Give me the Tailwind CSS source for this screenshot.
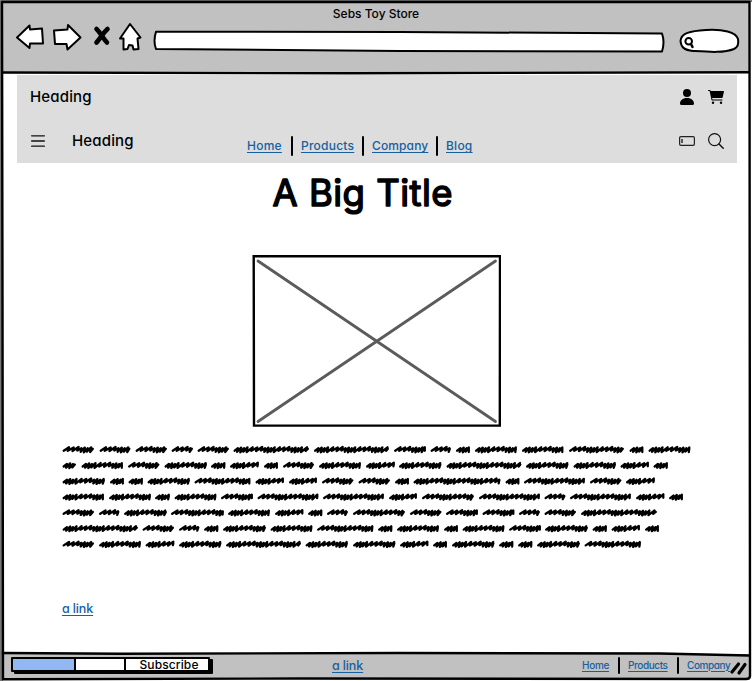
<!DOCTYPE html>
<html lang="en">
<head>
<meta charset="utf-8">
<title>Sebs Toy Store</title>
<script src="https://cdn.jsdelivr.net/npm/@tailwindcss/browser@4"></script>
</head>
<body class="bg-white">
<div class="relative flex h-[681px] w-[752px] flex-col overflow-hidden bg-white px-[3px] pt-[2px] font-[Inter,sans-serif] text-black [font-feature-settings:'cv11']">
  <!-- browser bar -->
  <header class="flex h-[71px] flex-col bg-[#c1c1c1]">
    <h1 class="flex h-[24px] items-center justify-center text-[12px] leading-none font-medium">Sebs Toy Store</h1>
    <svg class="h-[40px] w-[746px] shrink-0" viewBox="3 26 746 40" fill="white" stroke="black" stroke-width="2" stroke-linejoin="round" stroke-linecap="round" overflow="visible">
      <path d="M17 37.500L29.500 25.500L30 29.500L42 28.500L43 43.500L30 43.500L29.500 48Z"/>
      <path d="M54 30.500L67.500 29.500L68 25L80.500 37.500L67.500 49.500L66.500 44L55 44Z"/>
      <path d="M96.500 29C101 33 103 39 107 42.500M107.500 29C102 34 100 39 96.500 42.500" fill="none" stroke-width="4.600"/>
      <path d="M130 24L140.500 37.500L137.500 38.500L138.500 49L133.500 49.500L132.500 45.500L129 45L127.500 49L123.500 49.500L123.500 38.500L120 38.500Z"/>
      <path d="M156 31.700L400 32L662 33.500Q665 42 662 51.500L400 51L156 49Q153 41 156 31.700Z"/>
      <path d="M680.500 41C681 33 690 31 706 30C723 29 736 32 738 39C739 44 738 47 734 49C724 53 710 52 693 51C684 50 681 47 680.500 41Z"/>
      <circle cx="688.700" cy="41.200" r="3.300" fill="none"/>
      <path d="M691 44L692.500 47" stroke-width="2.500"/>
    </svg>
  </header>

  <!-- page area -->
  <main class="flex h-[581px] flex-col pt-[2px] pr-[12px] pl-[14px]">
    <div class="flex h-[88px] flex-col bg-[#dddddd]">
      <div class="flex h-[44px] items-center justify-between pr-[13px] pl-[13px]">
        <span class="-mt-[2px] text-[15px] leading-none font-medium tracking-[0.01em]">Heading</span>
        <div class="flex items-center gap-[13px]">
          <svg class="h-4 w-4" viewBox="0 0 16 16"><path d="M8 8a4 4 0 1 0 0-8 4 4 0 0 0 0 8m-7 6.500c0-3 2.500-5.500 7-5.500s7 2.500 7 5.500q0 1.500-1.500 1.500h-11Q1 16 1 14.500"/></svg>
          <svg class="h-4 w-4" viewBox="0 0 16 16"><path d="M0 1.500A.5.5 0 0 1 .5 1H2a.5.5 0 0 1 .485.379L2.750 2H15.500a.5.5 0 0 1 .49.600L14.600 8.600a.5.5 0 0 1-.49.400H4.200l.2 1.500H14a.5.5 0 0 1 0 1H4a.5.5 0 0 1-.49-.400L1.610 2H.5a.5.5 0 0 1-.5-.5z"/><circle cx="5" cy="13.800" r="1.200"/><circle cx="13" cy="13.800" r="1.200"/></svg>
        </div>
      </div>
      <div class="flex h-[44px] items-center pr-[13px] pl-[14px]">
        <svg class="h-3 w-[14px]" viewBox="0 0 14 12" fill="none" stroke="#111" stroke-width="1.300" stroke-linecap="round"><path d="M.6 .8H13.400M.6 6H13.400M.6 11.200H13.400"/></svg>
        <span class="-mt-[2px] ml-[27px] w-[62px] text-[15px] leading-none font-medium tracking-[0.01em]">Heading</span>
        <nav class="mt-[10px] ml-[113px] flex items-center text-[12px] leading-[15px] font-medium text-[#1660a0] [&>a]:-mt-[1px] [&>a]:underline [&>a]:decoration-1 [&>a]:underline-offset-[2px]">
          <a class="w-[36px] tracking-[0.02em]">Home</a><i class="mx-[8px] h-[20px] w-[2px] rounded bg-black"></i>
          <a class="w-[53px] tracking-[0.02em]">Products</a><i class="mx-[8px] h-[20px] w-[2px] rounded bg-black"></i>
          <a class="w-[56px] tracking-[0.01em]">Company</a><i class="mx-[8px] h-[20px] w-[2px] rounded bg-black"></i>
          <a class="w-[27px] tracking-[0.02em]">Blog</a>
        </nav>
        <div class="ml-auto flex items-center gap-[13px]">
          <svg class="h-4 w-4" viewBox="0 0 16 16" fill="none" stroke="#222"><rect x=".6" y="3.600" width="14.800" height="8.800" rx="1.300" stroke-width="1.200"/><path d="M3 6v4" stroke="#555" stroke-width="2"/></svg>
          <svg class="h-4 w-4" viewBox="0 0 16 16" fill="none" stroke="#111" stroke-width="1.200" stroke-linecap="round"><circle cx="6.600" cy="6.600" r="6"/><path d="M11 11L15.200 15.200" stroke-width="1.500"/></svg>
        </div>
      </div>
    </div>

    <svg class="h-[60px] w-[720px]" viewBox="17 163 720 60"><text x="272.500" y="205.500" textLength="180" lengthAdjust="spacing" class="text-[36.500px] font-normal [stroke-linejoin:round]" stroke="black" stroke-width="1.500">A Big Title</text></svg>

    <!-- image placeholder -->
    <svg class="mt-[32px] ml-[235px] h-[172px] w-[249px]" viewBox="252 255 249 172" fill="none" stroke-linecap="round">
      <path d="M258 261L495.500 421.500M495.500 261L258 421.500" stroke="#5b5b5b" stroke-width="2.800"/>
      <path d="M253.700 256.300L500 256.100L499.800 425.600L254 425.600Z" stroke="black" stroke-width="2.400"/>
    </svg>

    <!-- scribbled paragraph -->
    <svg id="scribble" class="mt-[13px] ml-[43px] h-[116px] w-[640px]" viewBox="60 440 640 116" fill="none" stroke="black" stroke-width="2.300" stroke-linecap="round" stroke-linejoin="round"></svg>

    <a class="mt-[45px] ml-[45px] w-[31px] text-[12.500px] leading-[15px] font-medium tracking-[-0.01em] whitespace-nowrap text-[#1660a0] underline decoration-1 underline-offset-[2px]">a link</a>
  </main>

  <!-- status bar -->
  <footer class="flex h-[24px] items-center bg-[#c1c1c1] pl-[8px]">
    <div class="-mt-[4px] flex h-[15px] w-[199px] rounded-[1px] border-2 border-black bg-white text-[12px] shadow-[3px_2px_0_#000]">
      <div class="w-[61px] bg-[#91b8f3]"></div>
      <div class="w-[52px] border-x-2 border-black"></div>
      <div class="flex flex-1 items-center justify-center pt-[2px] pl-[4px] leading-none font-medium tracking-[0.01em]">Subscribe</div>
    </div>
    <a class="-mt-[2px] ml-[122px] w-[31px] text-[12.500px] leading-[15px] font-medium tracking-[-0.01em] whitespace-nowrap text-[#1660a0] underline decoration-1 underline-offset-[2px]">a link</a>
    <nav class="-mt-[1px] ml-[219px] flex items-center text-[10px] leading-[15px] font-medium text-[#1660a0] [&>a]:-mt-[1px] [&>a]:underline [&>a]:decoration-1 [&>a]:underline-offset-[2px]">
      <a class="w-[28px] tracking-[-0.03em]">Home</a><i class="mx-[8px] h-[17px] w-[2px] rounded bg-black"></i>
      <a class="w-[41px] tracking-[-0.04em]">Products</a><i class="mx-[8px] h-[17px] w-[2px] rounded bg-black"></i>
      <a class="w-[44px] tracking-[-0.04em]">Company</a>
    </nav>
  </footer>

  <!-- hand-drawn window frame and resize grip -->
  <svg class="pointer-events-none absolute inset-0 h-[681px] w-[752px]" viewBox="0 0 752 681" fill="none" stroke="black" stroke-width="2.400" stroke-linejoin="round" stroke-linecap="round">
    <path d="M0 0H752V2H3L2 300L3 681H0Z" fill="#777" stroke="none"/>
    <path d="M2 2L749.500 2L750 676Q750 679 746 679L300 678.500L3 679.300L2.500 300Z"/>
    <path d="M3 72.500L350 73.300L749 72.300M3 653L120 653.800L400 653L660 653.500L749 655.500"/>
    <path d="M732 672L738.500 664M739 673L745 664.500" stroke-width="3.200"/>
  </svg>
</div>
<script>
// Start and end x of each scribbled word, one array per line.
const lines = [
[62.500,94,99.500,130.500,135.500,167,171.500,193,197.500,229,233.500,309,314,389,394,426,430.500,451,456,470,475,517,522,563.500,569,624,629.500,643.500,648.500,690.500],
[62.500,76,81.500,123,128,159.500,164.500,207,211,225.500,230,259,264,278,283,314,319,361,366,395,399,441.500,446.500,521.500,526,568.500,573.500,616,620.500,649,653.500,668],
[62.500,105,110,124,128.500,143,147.500,190,194.500,250.500,255.500,284,289,317,322,353.500,358.500,390,395,409,413.500,500.500,505.500,519.500,524,585,590,621.500,626,655],
[62.500,104,109,151,155,170,174.500,216.500,221,253,257.500,318.500,323,384,389,417,422,474,479,540,544.500,565.500,570,631,636,664.500,669,683],
[62.500,94,99,119.500,124,167,171,224,228,270,275,303.500,308,322.500,327,348,353,405,410,441.500,446,478,482.500,514.500,519,540,544.500,576,581,657],
[62.500,138,142.500,174,179,199.500,204,218.500,223,266,270.500,312.500,317,373.500,378,392.500,397,439,444,458,462.500,504.500,509,541,545,588,592.500,607,611.500,640,645,659],
[62.500,94,99,141,145.500,174.500,179,221.500,226,301,305.500,348,353,395.500,400,428.500,433,447,452,494.500,499,513.500,518,532.500,537,580,584.500,641]];
const step = [5.6, 5.2, 5.4, 3.4, 3.6, 3.2, 3.8], up = [-2.1, -1.9, -2.4, -1.2, -1.8, -1.2, -2], down = [1.4, 1.6, 1.1, 2.4, 2.9, 2.2, 2.6];
let d = "";
lines.forEach((line, row) => {
  const y = 449.4 + row * 15.78;
  for (let i = 0; i < line.length; i += 2) {
    const a = line[i] + 1.2, b = line[i + 1] - 1.2, w = b - a;
    // Words of 14, 28 and 42 px open with tight strokes, the others with long ones.
    let k = w < 14 || (w > 24 && w < 28) || (w > 39 && w < 42) || w > 70 ? 3 : 0, x = a;
    d += `M${a} ${y + 1.3}`;
    while (x < b - 2) {
      const j = k++ % 7, s = step[j];
      d += `L${Math.min(x + s * 0.95, b)} ${y + up[j]}L${Math.min(x + s * 0.72, b)} ${y + down[j]}`;
      x += s * 0.9;
    }
    d += `L${b} ${y - 0.6}`;
  }
});
const p = document.createElementNS("http://www.w3.org/2000/svg", "path");
p.setAttribute("d", d);
document.getElementById("scribble").append(p);
</script>
</body>
</html>
